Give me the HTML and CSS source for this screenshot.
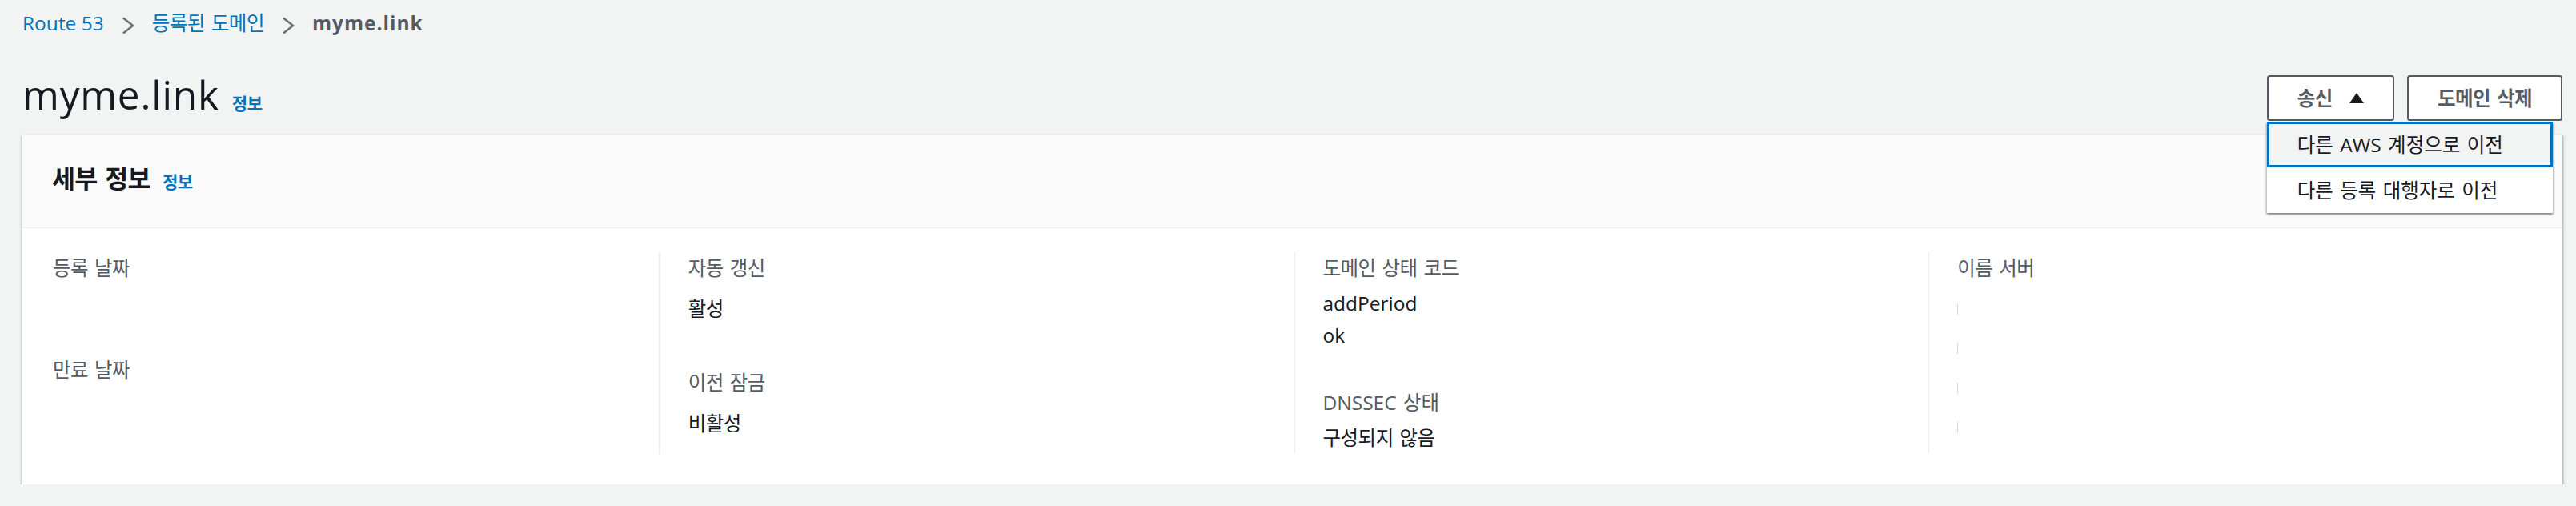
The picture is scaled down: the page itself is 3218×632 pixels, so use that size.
FILE: index.html
```html
<!DOCTYPE html>
<html lang="ko">
<head>
<meta charset="utf-8">
<title>myme.link</title>
<link rel="stylesheet" href="styles.css">
</head>
<body>
<div class="page">
  <nav class="breadcrumbs">
    <a class="crumb-link" href="#">Route 53</a>
    <svg class="crumb-sep" viewBox="0 0 16 22"><polyline points="2,1.5 14,11 2,20.5" fill="none" stroke="#687078" stroke-width="2.6"/></svg>
    <a class="crumb-link ko" href="#">등록된 도메인</a>
    <svg class="crumb-sep" viewBox="0 0 16 22"><polyline points="2,1.5 14,11 2,20.5" fill="none" stroke="#687078" stroke-width="2.6"/></svg>
    <span class="crumb-current">myme.link</span>
  </nav>

  <div class="page-header">
    <h1 class="page-title">myme.link<a class="info-link ko" href="#">정보</a></h1>
    <div class="actions">
      <div class="dropdown">
        <button class="btn"><span class="ko">송신</span><svg class="caret" viewBox="0 0 18 13"><path d="M0 13 L9 0 L18 13 Z" fill="#16191f"/></svg></button>
        <ul class="menu">
          <li class="menu-item is-focused">다른 AWS 계정으로 이전</li>
          <li class="menu-item">다른 등록 대행자로 이전</li>
        </ul>
      </div>
      <button class="btn"><span class="ko">도메인 삭제</span></button>
    </div>
  </div>

  <section class="card">
    <header class="card-header">
      <h2 class="card-title ko">세부 정보</h2>
      <a class="info-link ko" href="#">정보</a>
    </header>
    <div class="columns">
      <div class="col">
        <div class="kv">
          <div class="kv-label">등록 날짜</div>
          <div class="kv-value is-empty"></div>
        </div>
        <div class="kv">
          <div class="kv-label">만료 날짜</div>
        </div>
      </div>
      <div class="col">
        <div class="kv">
          <div class="kv-label">자동 갱신</div>
          <div class="kv-value ko">활성</div>
        </div>
        <div class="kv">
          <div class="kv-label">이전 잠금</div>
          <div class="kv-value ko">비활성</div>
        </div>
      </div>
      <div class="col compact">
        <div class="kv">
          <div class="kv-label">도메인 상태 코드</div>
          <div class="kv-value">
            <div>addPeriod</div>
            <div>ok</div>
          </div>
        </div>
        <div class="kv">
          <div class="kv-label mixed">DNSSEC 상태</div>
          <div class="kv-value ko">구성되지 않음</div>
        </div>
      </div>
      <div class="col">
        <div class="kv">
          <div class="kv-label">이름 서버</div>
          <div class="ns-list">
            <span class="ns-item"></span>
            <span class="ns-item"></span>
            <span class="ns-item"></span>
            <span class="ns-item"></span>
          </div>
        </div>
      </div>
    </div>
  </section>
</div>
</body>
</html>
```

FILE: styles.css
```css
* { box-sizing: border-box; }

body {
  margin: 0;
  background: #f2f3f3;
  font-family: "Open Sans", "Noto Sans CJK KR", sans-serif;
  font-size: 24.5px;
  line-height: 35px;
  color: #16191f;
}

.ko { letter-spacing: -0.02em; word-spacing: 2px; }

.page { padding: 11px 17px 0 28px; }

/* breadcrumbs */
.breadcrumbs {
  display: flex;
  align-items: center;
  height: 35px;
}
.crumb-link { color: #0073bb; text-decoration: none; }
.crumb-sep { width: 16px; height: 22px; margin: 7px 22px 0; flex: none; }
.crumb-current { color: #545b64; font-weight: 700; letter-spacing: 1px; }

/* page header */
.page-header {
  display: flex;
  justify-content: space-between;
  align-items: flex-start;
  margin-top: 40.5px;
}
.page-title {
  margin: 0;
  font-size: 49.5px;
  line-height: 63px;
  font-weight: 400;
  letter-spacing: 0.8px;
  color: #16191f;
}
.info-link {
  font-size: 21px;
  line-height: 1;
  font-weight: 700;
  color: #0073bb;
  text-decoration: none;
  margin-left: 16px;
}

.actions {
  display: flex;
  gap: 16px;
  margin-top: 7.5px;
}
.btn {
  font: inherit;
  font-weight: 700;
  line-height: 35px;
  color: #545b64;
  background: #fff;
  border: 2px solid #545b64;
  border-radius: 3.5px;
  padding: 9px 36px;
  display: flex;
  align-items: center;
}
.caret { width: 18px; height: 13px; margin-left: 21px; }

.dropdown { position: relative; }
.menu {
  position: absolute;
  left: 0;
  top: 100%;
  margin: 1px 0 0;
  padding: 0;
  list-style: none;
  width: 357px;
  background: #fff;
  z-index: 5;
  box-shadow: 0 2px 2px 0 rgba(0, 28, 36, 0.3), 2px 2px 2px 0 rgba(0, 28, 36, 0.15), -2px 2px 2px 0 rgba(0, 28, 36, 0.15);
}
.menu-item {
  padding: 11px 38px;
  line-height: 35px;
  word-spacing: 2px;
  white-space: nowrap;
  color: #16191f;
}
.menu-item.is-focused {
  background: #f2f3f3;
  border: 3px solid #0073bb;
  padding: 8px 35px;
}

/* card */
.card {
  margin-top: 16px;
  background: #fff;
  border-top: 1px solid #eaeded;
  box-shadow: 0 2px 2px 0 rgba(0, 28, 36, 0.3), 2px 2px 2px 0 rgba(0, 28, 36, 0.15), -2px 2px 2px 0 rgba(0, 28, 36, 0.15);
}
.card-header {
  display: flex;
  align-items: baseline;
  background: #fafafa;
  border-bottom: 1px solid #eaeded;
  padding: 36px 37px 41px;
}
.card-title {
  margin: 0;
  font-size: 31.5px;
  line-height: 38.5px;
  font-weight: 700;
  color: #16191f;
}
.card-header .info-link { margin-left: 15px; }

.columns {
  display: grid;
  grid-template-columns: repeat(4, 1fr);
  padding: 30.5px 0 37.5px 2px;
}
.col {
  padding-left: 36px;
  line-height: 40px;
}
.col + .col {
  border-left: 2px solid #eaeded;
  padding-left: 35px;
}

.kv-label { color: #545b64; letter-spacing: -0.02em; word-spacing: 2px; }
.kv-label.mixed { letter-spacing: 0; }
.kv-value { margin-top: 11px; color: #16191f; }
.kv-value.is-empty { height: 24px; }
.kv + .kv { margin-top: 52px; }

.col.compact .kv-value { margin-top: 4px; }
.col.compact .kv + .kv { margin-top: 44px; }

.ns-list {
  display: flex;
  flex-direction: column;
  gap: 35.3px;
  margin-top: 24px;
}
.ns-item {
  display: block;
  width: 1px;
  height: 14px;
  background: #d5dbdb;
}
```
